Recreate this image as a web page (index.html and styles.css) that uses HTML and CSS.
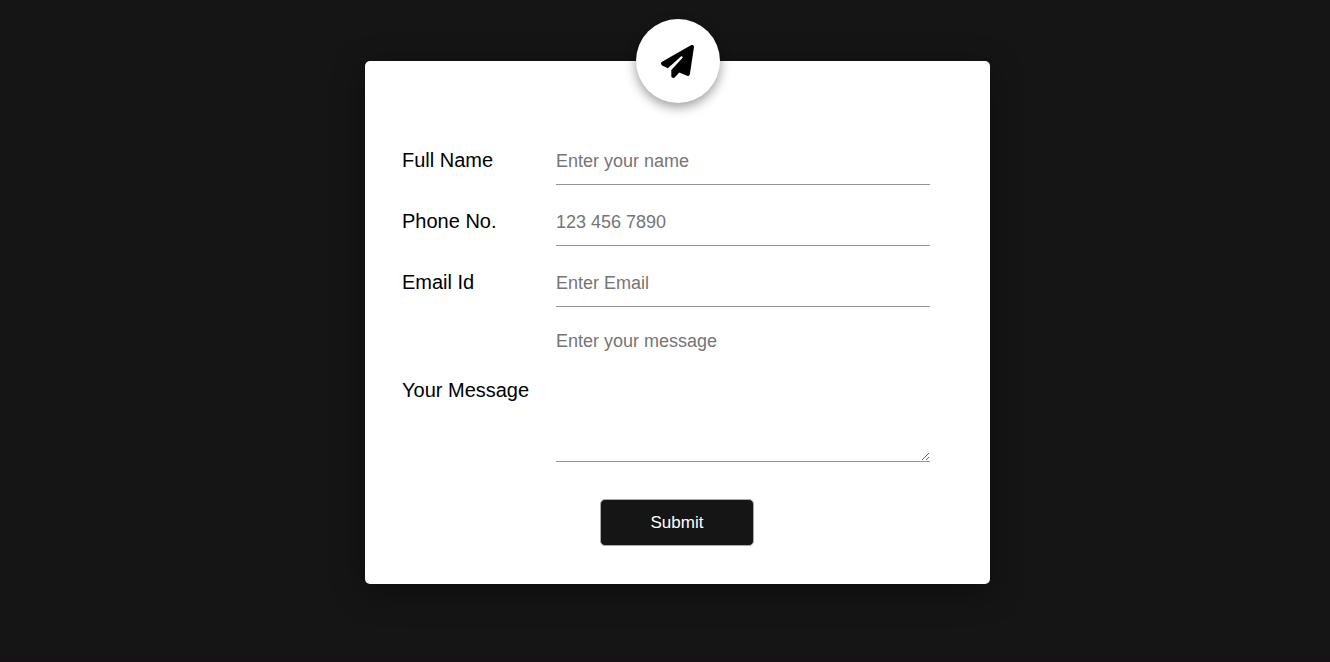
FILE: index.html
```html
<!DOCTYPE html>
<html lang="en">
<head>
<meta charset="utf-8">
<meta name="viewport" content="width=device-width, initial-scale=1">
<title>Contact form</title>
<link rel="stylesheet" href="styles.css">
</head>
<body>
<main class="page">
  <form class="card">
    <div class="badge">
      <svg class="badge-icon" viewBox="0 0 512 512" aria-hidden="true"><path d="M498.1 5.6c10.1 7 15.4 19.1 13.5 31.2l-64 416c-1.5 9.7-7.4 18.2-16 23s-18.9 5.4-28 1.6L284 427.7l-68.5 74.1c-8.9 9.7-22.9 12.9-35.2 8.1S160 493.2 160 480V396.4c0-4 1.5-7.8 4.2-10.7L331.8 202.8c5.8-6.3 5.6-16-.4-22s-15.7-6.4-22-.7L106 360.8 17.7 316.6C7.1 311.3 .3 300.7 0 288.9s5.9-22.8 16.1-28.7l448-256c10.7-6.1 23.9-5.5 34 1.4z"/></svg>
    </div>
    <div class="fields">
      <label class="label" for="name">Full Name</label>
      <input class="field" id="name" type="text" placeholder="Enter your name">
      <label class="label" for="phone">Phone No.</label>
      <input class="field" id="phone" type="tel" placeholder="123 456 7890">
      <label class="label" for="email">Email Id</label>
      <input class="field" id="email" type="email" placeholder="Enter Email">
      <label class="label" for="message">Your Message</label>
      <textarea class="field message" id="message" placeholder="Enter your message"></textarea>
    </div>
    <button class="submit" type="submit">Submit</button>
  </form>
</main>
</body>
</html>
```
FILE: styles.css
```css
* {
  box-sizing: border-box;
}

body {
  margin: 0;
  background: #151515;
  color: #000;
  font: 20px/24px "Liberation Sans", Arial, sans-serif;
}

.page {
  display: flex;
  justify-content: center;
  align-items: flex-start;
  min-height: 100vh;
  padding: 61px 0 61px 25px;
  border-bottom: 4px solid #171215;
}

.card {
  position: relative;
  display: flex;
  flex-direction: column;
  width: 100%;
  max-width: 625px;
  padding: 76px 60px 38px 37px;
  background: #fff;
  border-radius: 5px;
  box-shadow: 0 8px 32px rgba(0, 0, 0, 0.4);
}

.badge {
  position: absolute;
  top: 0;
  left: 50%;
  display: flex;
  align-items: center;
  justify-content: center;
  width: 84px;
  height: 84px;
  background: #fff;
  border-radius: 50%;
  box-shadow: 0 4px 12px rgba(0, 0, 0, 0.4);
  transform: translate(-50%, -50%);
}

.badge-icon {
  width: 33px;
  height: 33px;
}

.fields {
  display: grid;
  grid-template-columns: 140px 1fr;
  align-items: center;
  gap: 13px 14px;
}

.label {
  padding-bottom: 2px;
}

.field {
  width: 100%;
  height: 48px;
  padding: 11px 0 10px;
  border: 0;
  border-bottom: 1px solid #949494;
  border-radius: 0;
  outline: 0;
  background: transparent;
  font: 18px/21px "Liberation Sans", Arial, sans-serif;
}

.field::placeholder {
  color: #757575;
}

.message {
  display: block;
  height: 142px;
  resize: vertical;
}

.submit {
  align-self: center;
  margin: 37px 0 0 22px;
  padding: 13px 50px 12px;
  border: 1px solid #aaa;
  border-radius: 5px;
  background: #151515;
  color: #fff;
  font: 17px/20px "Liberation Sans", Arial, sans-serif;
}
```
